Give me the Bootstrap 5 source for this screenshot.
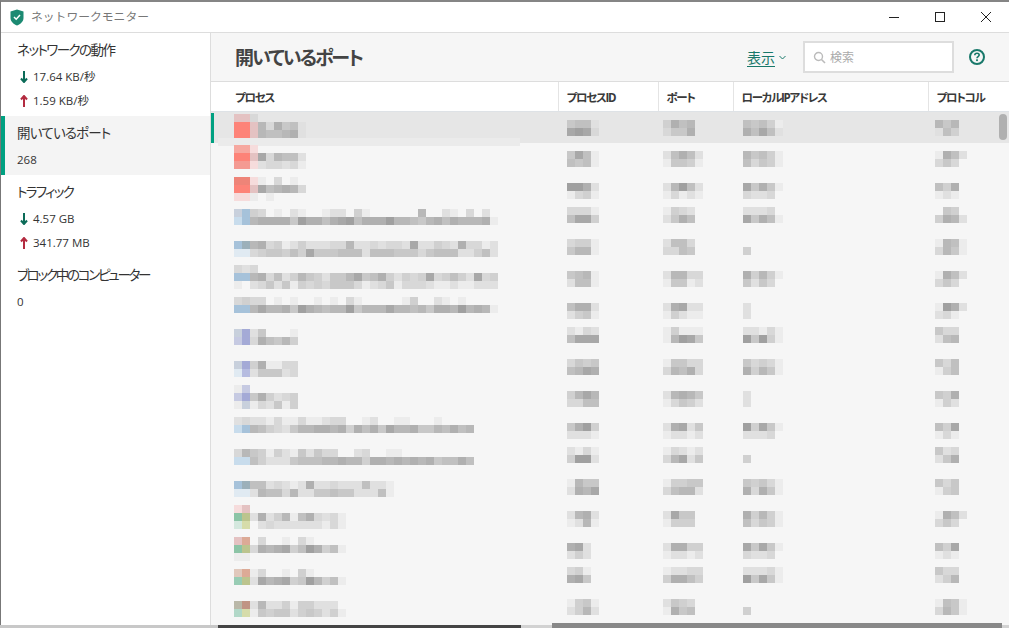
<!DOCTYPE html>
<html lang="ja">
<head>
    <meta charset="UTF-8">
    <meta name="viewport" content="width=device-width, initial-scale=1.0">
    <title>ネットワークモニター</title>
    <link href="https://cdn.jsdelivr.net/npm/bootstrap@5.3.0/dist/css/bootstrap.min.css" rel="stylesheet">
    <style>
        html, body { height: 100%; overflow: hidden; }
        body {
            background: #fff;
            color: #333;
            font-family: "Open Sans", "Noto Sans CJK JP", sans-serif;
            font-feature-settings: "palt";
            font-size: 14px;
        }
        .app-window { height: 625px; border-top: 2px solid #858585; border-left: 1px solid #777; position: relative; }
        .title-bar { height: 31px; border-bottom: 1px solid #ddd; }
        .title-text { font-size: 11.8px; color: #777; font-feature-settings: normal; line-height: 1; margin-left: 7px; }
        .shield { margin-left: 9px; }
        .win-btn { width: 46px; height: 30px; }
        .app-body { height: 592px; }
        .side { width: 210px; border-right: 1px solid #ddd; flex: none; }
        .side-item { padding: 5px 0 4px 16px; position: relative; }
        .side-item.active { background: #f4f4f4; }
        .side-item.active::before { content: ""; position: absolute; left: 0; top: 0; bottom: 0; width: 4px; background: #00a081; }
        .side-title { height: 24px; line-height: 24px; font-size: 13.5px; color: #333; }
        .ls-a { letter-spacing: -1.55px; }
        .ls-b { letter-spacing: -0.8px; }
        .ls-c { letter-spacing: -1.7px; }
        .ls-d { letter-spacing: -2.25px; }
        .side-val { height: 24px; line-height: 24px; font-size: 11.5px; color: #333; padding-top: 1px; }
        .side-title + .side-val { margin-top: 2px; }
        .side-val svg { margin: 0 5px 0 3px; }
        .main { background: #f6f6f6; min-width: 0; position: relative; }
        .main-head { height: 49px; border-bottom: 1px solid #ddd; padding: 0 24px 0 24px; }
        .main-title { font-size: 19px; font-weight: 700; color: #444; margin: 2px 0 0; line-height: 1; letter-spacing: -2px; }
        .view-link { color: #18786a; font-size: 14px; text-decoration: underline; text-underline-offset: 3px; }
        .search-box { width: 151px; height: 32px; border: 2px solid #ddd; background: #fff; margin-left: 17px; margin-right: 15px; padding: 1px 0 0 8px; color: #aaa; font-size: 12px; }
        .ports { table-layout: fixed; width: 798px; --bs-table-bg: transparent; margin: 0; }
        .ports col:nth-child(1) { width: 347px; }
        .ports col:nth-child(2) { width: 100px; }
        .ports col:nth-child(3) { width: 75px; }
        .ports col:nth-child(4) { width: 195px; }
        .ports th { height: 29px; background: #fff; font-size: 11.5px; font-weight: 700; color: #3a3a3a; padding: 3px 0 0 8px; border-right: 1px solid #e4e4e4; vertical-align: middle; letter-spacing: -1.3px; white-space: nowrap; }
        .ports th:first-child { padding-left: 24px; }
        .ports th:last-child { border-right: 0; }
        .ports td { height: 30px; padding: 0; vertical-align: top; border: 0; box-shadow: none; }
        .ports tr.selected td { height: 32px; background: #e6e6e6; }
        .ports svg { display: block; }
        .c0 { padding-left: 23px !important; position: relative; }
        .c1 { padding-left: 9px !important; }
        .c2 { padding-left: 5px !important; }
        .c3 { padding-left: 10px !important; }
        .c4 { padding-left: 7px !important; }
        .sel-mark { position: absolute; left: 0; top: 1px; width: 3px; height: 30px; background: #00a081; }
        .sel-fade { position: absolute; left: 7px; top: 26px; width: 302px; height: 8px; background: #ebebeb; z-index: 0; }
        .c0 svg { position: relative; z-index: 1; }
        .v-thumb { position: absolute; left: 788px; top: 81px; width: 8px; height: 26px; background: #b0b0b0; border-radius: 4px; }
        .h-thumb { position: absolute; left: 551px; bottom: -3px; width: 450px; height: 5px; background: #888; z-index: 3; }
        .strip { height: 3px; }
        .strip-a { width: 218px; background: #c8c8c8; }
        .strip-b { width: 303px; background: #444; }
        .strip-c { background: #d2d2d2; }
    </style>
</head>
<body>
    <div class="app-window">
        <!-- title bar -->
        <div class="title-bar d-flex align-items-center">
            <svg class="shield" width="14" height="17" viewBox="0 0 14 17"><path d="M7 0.5 L13.5 2.5 V9 C13.5 12.5 10.5 15 7 16.5 C3.5 15 0.5 12.5 0.5 9 V2.5 Z" fill="#1c8a72"/><path d="M4 8 L6.2 10.2 L10 6" fill="none" stroke="#fff" stroke-width="1.5"/></svg>
            <span class="title-text">ネットワークモニター</span>
            <div class="ms-auto d-flex">
                <div class="win-btn d-flex align-items-center justify-content-center"><svg width="10" height="10"><path d="M0 5.5H10" stroke="#222"/></svg></div>
                <div class="win-btn d-flex align-items-center justify-content-center"><svg width="10" height="10"><rect x="0.5" y="0.5" width="9" height="9" fill="none" stroke="#222"/></svg></div>
                <div class="win-btn d-flex align-items-center justify-content-center"><svg width="10" height="10"><path d="M0 0L10 10M10 0L0 10" stroke="#222"/></svg></div>
            </div>
        </div>

        <div class="app-body d-flex">
            <!-- sidebar -->
            <div class="side">
                <div class="side-item">
                    <div class="side-title ls-a">ネットワークの動作</div>
                    <div class="side-val d-flex align-items-center"><svg width="8" height="12" viewBox="0 0 8 12"><path d="M4 0V11M1 7.5L4 11L7 7.5" fill="none" stroke="#0b6b58" stroke-width="2"/></svg>17.64 KB/秒</div>
                    <div class="side-val d-flex align-items-center"><svg width="8" height="12" viewBox="0 0 8 12"><path d="M4 12V1M1 4.5L4 1L7 4.5" fill="none" stroke="#b32b40" stroke-width="2"/></svg>1.59 KB/秒</div>
                </div>
                <div class="side-item active">
                    <div class="side-title ls-b">開いているポート</div>
                    <div class="side-val">268</div>
                </div>
                <div class="side-item">
                    <div class="side-title ls-c">トラフィック</div>
                    <div class="side-val d-flex align-items-center"><svg width="8" height="12" viewBox="0 0 8 12"><path d="M4 0V11M1 7.5L4 11L7 7.5" fill="none" stroke="#0b6b58" stroke-width="2"/></svg>4.57 GB</div>
                    <div class="side-val d-flex align-items-center"><svg width="8" height="12" viewBox="0 0 8 12"><path d="M4 12V1M1 4.5L4 1L7 4.5" fill="none" stroke="#b32b40" stroke-width="2"/></svg>341.77 MB</div>
                </div>
                <div class="side-item">
                    <div class="side-title ls-d">ブロック中のコンピューター</div>
                    <div class="side-val">0</div>
                </div>
            </div>

            <!-- main -->
            <div class="main flex-grow-1">
                <div class="main-head d-flex align-items-center">
                    <h1 class="main-title">開いているポート</h1>
                    <div class="ms-auto d-flex align-items-center">
                        <a class="view-link" href="#">表示</a>
                        <svg class="ms-1" width="7" height="5" viewBox="0 0 7 5"><path d="M0.5 1L3.5 4L6.5 1" fill="none" stroke="#18786a"/></svg>
                        <div class="search-box d-flex align-items-center gap-1">
                            <svg width="13" height="13" viewBox="0 0 13 13"><circle cx="5.5" cy="5.5" r="4" fill="none" stroke="#bbb" stroke-width="1.4"/><path d="M8.5 8.5L12 12" stroke="#bbb" stroke-width="1.6"/></svg>
                            <span>検索</span>
                        </div>
                        <svg width="16" height="16" viewBox="0 0 16 16"><circle cx="8" cy="8" r="7" fill="none" stroke="#18786a" stroke-width="2"/><path d="M5.8 6.2C5.8 4.9 6.8 4.2 8 4.2C9.3 4.2 10.2 5 10.2 6.1C10.2 7.5 8 7.6 8 9.2" fill="none" stroke="#18786a" stroke-width="1.6"/><rect x="7.1" y="10.3" width="1.8" height="1.8" fill="#18786a"/></svg>
                    </div>
                </div>
                <table class="table ports">
                    <colgroup><col><col><col><col><col></colgroup>
                    <thead>
                        <tr><th>プロセス</th><th>プロセスID</th><th>ポート</th><th>ローカルIPアドレス</th><th>プロトコル</th></tr>
                    </thead>
                    <tbody id="rows"></tbody>
                </table>
                <div class="v-thumb"></div>
            </div>
        </div>
        <div class="h-thumb"></div>
    </div>
    <div class="strip d-flex"><div class="strip-a"></div><div class="strip-b"></div><div class="strip-c flex-grow-1"></div></div>

    <script src="https://cdn.jsdelivr.net/npm/bootstrap@5.3.0/dist/js/bootstrap.bundle.min.js"></script>
    <script>
        // blurred cells: one char per 8px block
        const colors = {
            0: "#a0a0a0", 1: "#a8a8a8", 2: "#b0b0b0", 3: "#b8b8b8", 4: "#c0c0c0",
            5: "#c8c8c8", 6: "#d0d0d0", 7: "#d8d8d8", 8: "#e0e0e0", 9: "#ececec",
            R: "#fd8378", T: "#ee8478", S: "#f6a8a0", p: "#e4c2c2", q: "#f6dcdc", o: "#f49a92",
            B: "#a6c2da", A: "#9cb0ba", b: "#c8dcec", c: "#e0eaf2", L: "#c8d0dc",
            V: "#a4aad6", v: "#c6cae2", W: "#b6bce0",
            G: "#8cc4a6", H: "#98ccb4", I: "#b2d8c8", g: "#bcc48e", h: "#d6dcaa", m: "#d4e8de", k: "#bab8a8", n: "#c09484", s: "#dcaa96", u: "#e0c8bc"
        };

        const processCells = [
            ["pp7", "RRp372548", "RRp344328"],
            ["SSq", "RRp173448", "ooq877879"],
            ["TTq9.7.9", "RRp143237", "qq9.9"],
            ["LB67.9.89..988.69......3..89.7.8.", "bB3222250224210422203345324233329"],
            ["BA327698688877388787781886782 7798", "cc765564615554448444555754448 8648"],
            ["787", "BB327486356855315426867617646 8176", "9.875859676755579875977789989 9888"],
            ["7677.9.9..9.9.79.....96..89.9", "BB313325023433053331334352230 3239"],
            ["LV85...9", "vV724536"],
            ["LV629977", "cW855587"],
            ["9v", "vV526876", "9L978596"],
            ["87889799799877..98..99...9", "bB346785332232624251332553424 3"],
            ["7356968958577..87..99", "bb468885444332336223232325442 4"],
            ["BA448789828878884889", "cc834473885545588849"],
            ["qp", "Gg828639427879", "mh.87888888979"],
            ["ps.7..9.79", "Gg723216402649", "99"],
            ["us97..9.69", "Hg813216503649"],
            ["kn8388696688 8", "Ih956558656869"]
        ];

        // pid, port, ip, protocol
        const otherCells = [
            [["5448", "1017"], ["6243", "7552"], ["45469", "24148"], ["353", "846"]],
            [["5149", "4549"], ["84248", "95569"], ["35469", "47569"], ["9248", "757"]],
            [["0028", "9769"], ["83048", "97989"], ["15259", "7887"], ["462", "989"]],
            [["7779", "4116"], ["9678", "8524"], ["8887", "15249"], [".56", "6238"]],
            [["7669", "5339"], ["8447", "7745"], ["", "6"], ["9349", "7359"]],
            [["5439", "8449"], ["83377", "95598"], ["26369", "5857"], ["9248", "757"]],
            [["4228", "8659"], ["82188", "96899"], ["8", "8"], ["9028", "879"]],
            [["8978", "4111"], ["96999", "93015"], ["88979", "05069"], ["577", "843"]],
            [["7565", "4312"], ["95577", "73427"], ["57679", "26359"], ["574", "964"]],
            [["6313", "7744"], ["83235", "97568"], ["8", "8"], ["562", "968"]],
            [["5206", "8889"], ["82185", "98898"], ["06159", "8887"], ["461", "979"]],
            [["8979", "6008"], ["97898", "73185"], ["", "6"], ["587", "852"]],
            [["9355", "8231"], ["96655", "74338"], ["56579", "27259"], ["575", "965"]],
            [["8328", "9839"], ["8155", "9666"], ["26369", "47569"], ["9248", "757"]],
            [["218", "868"], ["82266", "98898"], ["15159", "7887"], ["461", "989"]],
            [["769", "215"], ["98877", "62246"], ["88879", "05159"], ["577", "863"]],
            [["9659", "8638"], ["8567", "9254"], ["", "6"], ["9459", "7359"]]
        ];
        const processTop = [2, 2, 4, 6, 8, 2, 4, 6, 8, 2, 4, 6, 8, 2, 4, 6, 8];
        const otherY = [119, 151, 183, 207, 239, 271, 303, 327, 359, 391, 423, 447, 479, 511, 543, 567, 599];

        function mosaic(lines, top) {
            const clean = lines.map(l => l.replace(/ /g, ""));
            const width = Math.max(...clean.map(l => l.length), 1) * 8;
            let rects = "";
            clean.forEach((line, y) => {
                [...line].forEach((ch, x) => {
                    if (colors[ch]) rects += `<rect x="${x * 8}" y="${y * 8}" width="8" height="8" fill="${colors[ch]}"/>`;
                });
            });
            return `<svg width="${width}" height="${clean.length * 8}" style="margin-top:${top}px">${rects}</svg>`;
        }

        const rows = document.getElementById("rows");
        processCells.forEach((cell, i) => {
            const rowTop = i === 0 ? 111 : 113 + 30 * i;
            const tr = document.createElement("tr");
            if (i === 0) tr.className = "selected";
            const extra = i === 0 ? '<span class="sel-mark"></span><span class="sel-fade"></span>' : "";
            let html = `<td class="c0">${extra}${mosaic(cell, processTop[i])}</td>`;
            otherCells[i].forEach((c, n) => {
                const lines = c[0] === "" ? ["", c[1]] : c;
                html += `<td class="c${n + 1}">${mosaic(lines, otherY[i] - rowTop)}</td>`;
            });
            tr.innerHTML = html;
            rows.appendChild(tr);
        });
    </script>
</body>
</html>
